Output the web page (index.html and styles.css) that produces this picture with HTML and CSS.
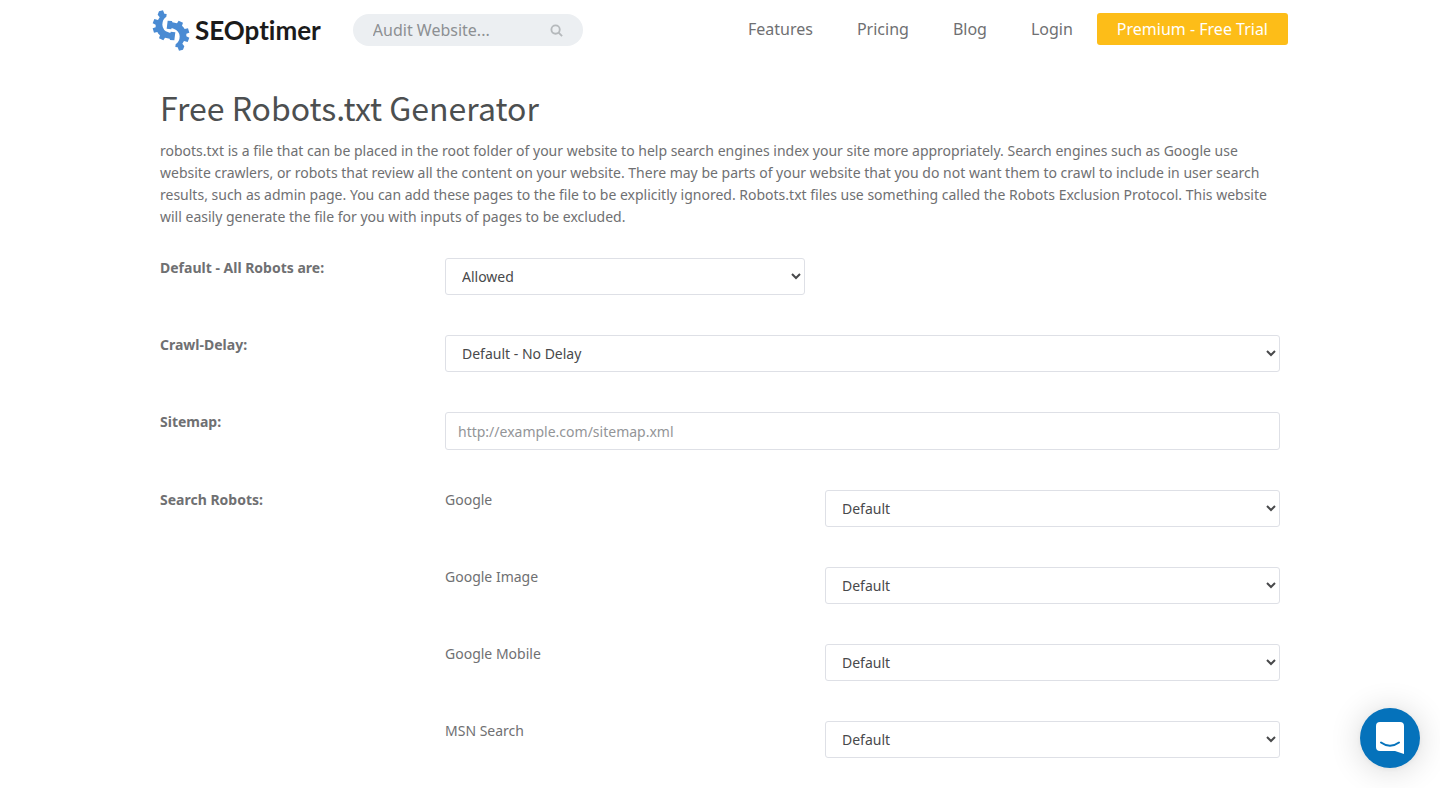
FILE: index.html
```html
<!DOCTYPE html>
<html lang="en">
<head>
<meta charset="utf-8">
<meta name="viewport" content="width=device-width, initial-scale=1">
<title>Free Robots.txt Generator</title>
<link rel="stylesheet" href="styles.css">
</head>
<body>
<header class="header">
  <a class="logo" href="#">
    <svg class="logo-mark" viewBox="6 8 114 123" aria-hidden="true">
      <defs>
        <path id="half-gear" fill="#4a8bd3" d="M27 12L39 9L43 19L50 20L49 28Q37 36 37 52Q38 69 55 75L61 77L62 73L76 75L73 99L60 98L59 94L45 91L40 99L27 93L30 84Q24 79 22 74L12 76L8 63L17 60L17 52L8 48L13 35L24 38L29 30L23 22Z"/>
      </defs>
      <use href="#half-gear"/>
      <use href="#half-gear" transform="rotate(180 63 69.500)"/>
    </svg>
    <span class="logo-text">SEOptimer</span>
  </a>
  <form class="search">
    <input class="search-input" type="text" placeholder="Audit Website..." aria-label="Audit Website">
    <button class="search-button" type="button" aria-label="Search">
      <svg viewBox="0 0 14 14" width="13" height="13" fill="none" stroke="#b5b9bc" stroke-width="2" aria-hidden="true"><circle cx="6" cy="6" r="4.500"/><path d="M9.300 9.300L13 13"/></svg>
    </button>
  </form>
  <div class="menu">
    <nav class="nav">
      <a href="#">Features</a>
      <a href="#">Pricing</a>
      <a href="#">Blog</a>
      <a href="#">Login</a>
    </nav>
    <a class="premium" href="#">Premium - Free Trial</a>
  </div>
</header>
<main class="main">
  <h1 class="title">Free Robots.txt Generator</h1>
  <p class="intro">robots.txt is a file that can be placed in the root folder of your website to help search engines index your site more appropriately. Search engines such as Google use website crawlers, or robots that review all the content on your website. There may be parts of your website that you do not want them to crawl to include in user search results, such as admin page. You can add these pages to the file to be explicitly ignored. Robots.txt files use something called the Robots Exclusion Protocol. This website will easily generate the file for you with inputs of pages to be excluded.</p>
  <form class="form">
    <div class="row">
      <label class="label" for="all">Default - All Robots are:</label>
      <select class="control span-4" id="all"><option>Allowed</option><option>Refused</option></select>
    </div>
    <div class="row">
      <label class="label" for="delay">Crawl-Delay:</label>
      <select class="control span-9" id="delay"><option>Default - No Delay</option></select>
    </div>
    <div class="row">
      <label class="label" for="sitemap">Sitemap:</label>
      <input class="control text span-9" id="sitemap" type="text" placeholder="http://example.com/sitemap.xml">
    </div>
    <div class="row">
      <span class="label">Search Robots:</span>
      <label class="robot" for="google">Google</label>
      <select class="control span-5" id="google"><option>Default</option></select>
    </div>
    <div class="row">
      <label class="robot" for="image">Google Image</label>
      <select class="control span-5" id="image"><option>Default</option></select>
    </div>
    <div class="row">
      <label class="robot" for="mobile">Google Mobile</label>
      <select class="control span-5" id="mobile"><option>Default</option></select>
    </div>
    <div class="row">
      <label class="robot" for="msn">MSN Search</label>
      <select class="control span-5" id="msn"><option>Default</option></select>
    </div>
  </form>
</main>
<button class="chat" type="button" aria-label="Open chat">
  <svg viewBox="0 0 28 32" width="28" height="32" aria-hidden="true"><path fill="#fff" d="M4 0H24Q28 0 28 4V32L19 29H4Q0 29 0 25V4Q0 0 4 0Z"/><path d="M5 20.500Q14 27 23 20.500" fill="none" stroke="#0572bb" stroke-width="2" stroke-linecap="round"/></svg>
</button>
</body>
</html>
```
FILE: styles.css
```css
* { box-sizing: border-box; }
body {
  margin: 0;
  background: #fff;
  color: #6f7072;
  font: 14px/22px "Noto Sans", sans-serif;
}
a { color: inherit; text-decoration: none; }
input, select, button { font: inherit; }

.header {
  display: flex;
  align-items: center;
  max-width: 1136px;
  height: 60px;
  margin: 0 auto;
}
.logo { display: flex; align-items: center; gap: 5px; margin-right: 32px; }
.logo-mark { width: 38px; height: 41px; }
.logo-text {
  color: #1b1b1b;
  font: 700 26px/32px Lato, sans-serif;
  font-variant-ligatures: none;
}
.search {
  display: flex;
  align-items: center;
  width: 230px;
  height: 32px;
  padding: 0 20px;
  border-radius: 16px;
  background: #eceff2;
}
.search-input {
  flex: 1;
  min-width: 0;
  padding: 0;
  border: 0;
  outline: 0;
  background: none;
  color: #6f7072;
  font-size: 16px;
}
.search-input::placeholder { color: #8d9093; opacity: 1; }
.search-button { display: flex; padding: 0; border: 0; background: none; }
.menu {
  display: flex;
  align-items: center;
  gap: 24px;
  margin-left: auto;
  padding-bottom: 2px;
  font-size: 16px;
}
.nav { display: flex; gap: 44px; }
.premium {
  padding: 5px 20px;
  border-radius: 3px;
  background: #fdbd18;
  color: #fff;
}

.main { max-width: 1140px; margin: 0 auto; padding: 24px 10px; }
.title {
  margin: 0 0 10px;
  color: #4c4f50;
  font: 400 32px/46px "Noto Sans CJK SC", sans-serif;
}
.intro { margin: 0 0 30px; }
.form { display: grid; gap: 40px; }
.row {
  display: grid;
  grid-template-columns: repeat(12, 1fr);
  column-gap: 20px;
  align-items: start;
}
.label, .robot { line-height: 20px; }
.label { grid-column: 1 / span 3; font-weight: 700; }
.robot { grid-column: 4 / span 4; }
.control {
  width: 100%;
  height: 37px;
  padding: 6px 12px;
  border: 1px solid #dee0e6;
  border-radius: 3px;
  background: #fff;
  color: #48494b;
}
.text { height: 38px; }
.text::placeholder { color: #939598; opacity: 1; }
.span-4 { grid-column: 4 / span 4; }
.span-5 { grid-column: 8 / span 5; }
.span-9 { grid-column: 4 / span 9; }

.chat {
  position: fixed;
  right: 20px;
  bottom: 20px;
  display: grid;
  place-items: center;
  width: 60px;
  height: 60px;
  padding: 0;
  border: 0;
  border-radius: 50%;
  background: #0572bb;
  box-shadow: 0 1px 6px rgba(0, 0, 0, .06), 0 2px 32px rgba(0, 0, 0, .16);
}
```
